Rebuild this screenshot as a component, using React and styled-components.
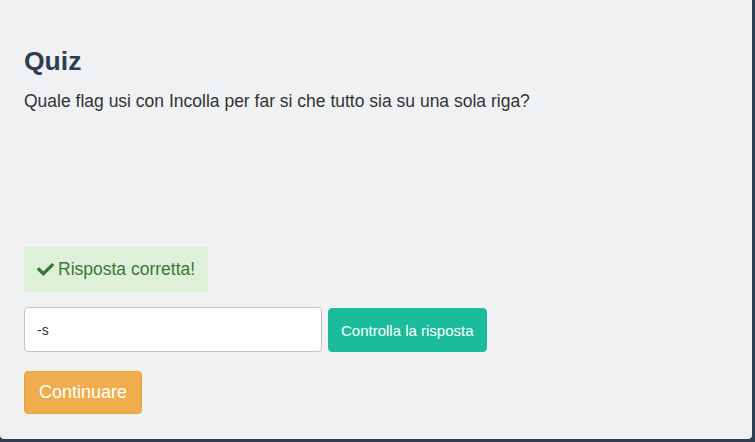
import React, { useState } from "react";
import styled, { createGlobalStyle } from "styled-components";
import { FaCheck } from "react-icons/fa";

const GlobalStyle = createGlobalStyle`
  html, body {
    margin: 0;
    padding: 0;
    background: #2c3e50;
    font-family: "Liberation Sans", Arial, sans-serif;
  }
  * {
    box-sizing: border-box;
  }
`;

const Panel = styled.div`
  width: 752px;
  height: 439px;
  background: #f0f1f3;
  border-radius: 0 0 4px 4px;
  padding: 46px 24px 0;
  display: flex;
  flex-direction: column;
`;

const Title = styled.h1`
  margin: 0;
  font-size: 26.5px;
  line-height: 30px;
  font-weight: 700;
  color: #2c3e50;
`;

const Question = styled.p`
  margin: 14px 0 0;
  font-size: 17.5px;
  line-height: 22px;
  color: #333;
  height: 157px;
`;

const Alert = styled.div`
  align-self: flex-start;
  display: inline-flex;
  align-items: center;
  gap: 4px;
  height: 45px;
  padding: 0 13px;
  background: #dff0d8;
  color: #3c763d;
  font-size: 17.5px;
`;

const Row = styled.div`
  display: flex;
  align-items: flex-end;
  gap: 6px;
  margin-top: 15px;
`;

const AnswerInput = styled.input`
  width: 298px;
  height: 45px;
  border: 1px solid #c4c4c4;
  border-radius: 4px;
  background: #fff;
  padding: 0 12px;
  font-family: inherit;
  font-size: 14px;
  color: #333;
  outline: none;
`;

const Button = styled.button`
  height: ${(p) => p.$h}px;
  padding: 0 ${(p) => p.$px}px;
  border: 1px solid ${(p) => p.$border};
  border-radius: 4px;
  background: ${(p) => p.$bg};
  color: #fff;
  font-family: inherit;
  font-size: ${(p) => p.$size}px;
  cursor: pointer;
`;

const Footer = styled.div`
  margin-top: 19px;
`;

export default function App() {
  const [answer, setAnswer] = useState("-s");

  return (
    <>
      <GlobalStyle />
      <Panel>
        <Title>Quiz</Title>
        <Question>
          Quale flag usi con Incolla per far si che tutto sia su una sola riga?
        </Question>
        <Alert>
          <FaCheck size={17} />
          Risposta corretta!
        </Alert>
        <Row>
          <AnswerInput
            value={answer}
            onChange={(e) => setAnswer(e.target.value)}
          />
          <Button $h={44} $px={12} $size={15} $bg="#1abc9c" $border="#1abc9c">
            Controlla la risposta
          </Button>
        </Row>
        <Footer>
          <Button $h={43} $px={14} $size={18} $bg="#f0ad4e" $border="#eea236">
            Continuare
          </Button>
        </Footer>
      </Panel>
    </>
  );
}
